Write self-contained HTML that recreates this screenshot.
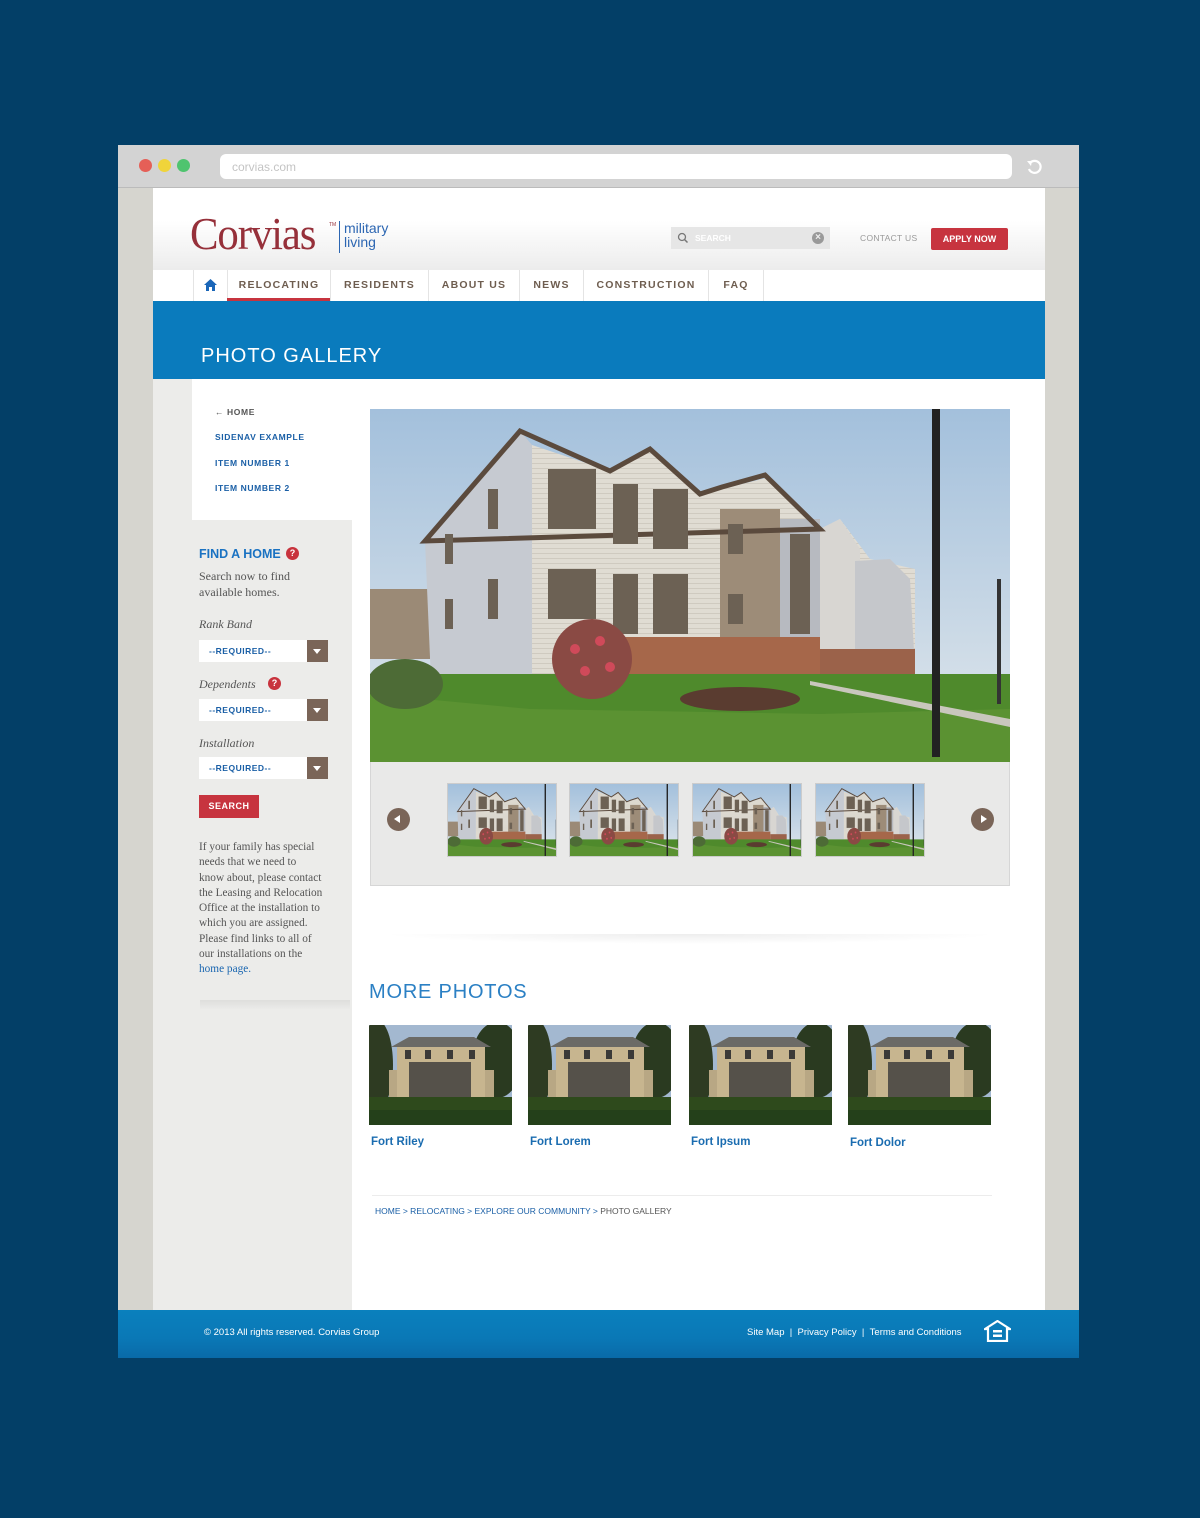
<!DOCTYPE html>
<html><head><meta charset="utf-8">
<style>
*{margin:0;padding:0;box-sizing:border-box}
body{width:1200px;height:1518px;background:#033f67;font-family:"Liberation Sans",sans-serif;position:relative;overflow:hidden}
.abs{position:absolute}
.win{left:118px;top:145px;width:961px;height:1213px;background:#d6d5cf}
.chrome{left:118px;top:145px;width:961px;height:43px;background:#d3d3d3;border-bottom:1px solid #bbb}
.dot{width:13px;height:13px;border-radius:50%;top:159px}
.url{left:220px;top:154px;width:792px;height:25px;background:#fff;border-radius:6px;color:#c4c4c4;font-size:12px;padding:6px 12px}
.page{left:153px;top:188px;width:892px;height:1122px;background:#fff}
.header{left:153px;top:188px;width:892px;height:82px;background:linear-gradient(#fff 40%,#ececec)}
.nav{left:153px;top:270px;width:892px;height:31px;background:#fff}
.nav span{position:absolute;top:0;height:31px;line-height:31px;font-size:10.5px;font-weight:bold;letter-spacing:1.2px;color:#6e5d4f;border-left:1px solid #e4e4e4;text-align:center}
.banner{left:153px;top:301px;width:892px;height:78px;background:#0a7bbd}
.side{left:153px;top:379px;width:199px;height:931px;background:#ececea}
.sidenav{left:192px;top:379px;width:160px;height:141px;background:#fff}
.sn{left:215px;font-size:8.5px;font-weight:bold;letter-spacing:.6px;color:#1a5fa6}
.serif{font-family:"Liberation Serif",serif;color:#555}
.sel{left:199px;width:129px;height:22px;background:#fff}
.sel b{position:absolute;left:10px;top:6px;font-size:8.5px;color:#1a5fa6;letter-spacing:.5px}
.sel i{position:absolute;right:0;top:0;width:21px;height:22px;background:#7a6558}
.sel i:after{content:"";position:absolute;left:6px;top:9px;border-left:4.5px solid transparent;border-right:4.5px solid transparent;border-top:5px solid #fff}
.q{width:13px;height:13px;border-radius:50%;background:#c8333d;color:#fff;font-size:9px;font-weight:bold;text-align:center;line-height:13px}
.cap{font-size:11.5px;font-weight:bold;color:#1a6cb0;top:1136px}
.tn{top:783px;width:110px;height:74px;border:1px solid #ccc}
.circ{top:808px;width:23px;height:23px;border-radius:50%;background:#7a6558}
</style></head><body>
<svg width="0" height="0" style="position:absolute">
<defs>
<linearGradient id="sky" x1="0" y1="0" x2="0" y2="1"><stop offset="0" stop-color="#a3c0dc"/><stop offset="1" stop-color="#e2e8ec"/></linearGradient>
<pattern id="sid" width="6" height="5" patternUnits="userSpaceOnUse"><rect width="6" height="5" fill="#e0dcd3"/><rect y="4" width="6" height="1" fill="#cfcac0"/></pattern>
<symbol id="apt" viewBox="0 0 640 354" preserveAspectRatio="none">
<rect width="640" height="354" fill="url(#sky)"/>
<rect x="0" y="180" width="60" height="70" fill="#9b8a76"/>
<polygon points="55,132 150,22 162,36 162,300 62,295" fill="#c6cad1"/>
<polygon points="162,36 240,62 280,40 330,85 360,78 400,68 450,120 470,110 500,150 545,160 545,260 162,300" fill="url(#sid)"/>
<rect x="350" y="100" width="60" height="135" fill="#9d8c78"/>
<rect x="410" y="110" width="40" height="130" fill="#b7bac0"/>
<polygon points="450,120 470,110 490,140 490,250 450,250" fill="#d8d6d2"/>
<polygon points="485,152 520,150 540,170 545,260 485,260" fill="#c5c7cb"/>
<rect x="237" y="228" width="213" height="75" fill="#a6674a"/>
<rect x="450" y="240" width="95" height="40" fill="#9b624a"/>
<polygon points="55,132 150,22 240,62 280,40 330,85 352,78 395,66 450,120" fill="none" stroke="#5b4a3d" stroke-width="5"/>
<g fill="#6c6154"><rect x="178" y="60" width="48" height="60"/><rect x="178" y="160" width="48" height="50"/><rect x="118" y="80" width="10" height="40"/><rect x="118" y="170" width="10" height="40"/><rect x="75" y="125" width="8" height="30"/><rect x="75" y="190" width="8" height="30"/><rect x="243" y="75" width="25" height="60"/><rect x="283" y="80" width="35" height="60"/><rect x="243" y="165" width="25" height="60"/><rect x="283" y="165" width="35" height="60"/><rect x="358" y="115" width="15" height="30"/><rect x="358" y="185" width="15" height="30"/><rect x="420" y="125" width="20" height="100"/></g>
<rect x="0" y="265" width="640" height="89" fill="#4f8a2c"/>
<polygon points="0,285 160,300 450,305 640,300 640,354 0,354" fill="#5b9232"/>
<polygon points="440,272 640,310 640,318 440,276" fill="#c9c7bd"/>
<ellipse cx="35" cy="275" rx="38" ry="25" fill="#4d6b36"/>
<ellipse cx="222" cy="250" rx="40" ry="40" fill="#8a4a44"/>
<circle cx="205" cy="240" r="5" fill="#d04a5a"/><circle cx="230" cy="232" r="5" fill="#d04a5a"/><circle cx="240" cy="258" r="5" fill="#d04a5a"/><circle cx="215" cy="262" r="5" fill="#d04a5a"/>
<ellipse cx="370" cy="290" rx="60" ry="12" fill="#5a3c30"/>
<rect x="562" y="0" width="8" height="348" fill="#222"/>
<rect x="627" y="170" width="4" height="125" fill="#333"/>
</symbol>
<symbol id="house" viewBox="0 0 143 100" preserveAspectRatio="none">
<rect width="143" height="100" fill="#8aa7c8"/>
<rect x="0" y="0" width="143" height="100" fill="#c9d2dc" opacity=".4"/>
<ellipse cx="8" cy="40" rx="16" ry="45" fill="#2e3b22"/>
<ellipse cx="128" cy="35" rx="25" ry="38" fill="#2a3a20"/>
<rect x="20" y="45" width="105" height="30" fill="#b8a784"/>
<rect x="28" y="20" width="88" height="55" fill="#c7b58f"/>
<polygon points="22,22 40,12 105,12 122,22" fill="#6b6a66"/>
<rect x="40" y="37" width="62" height="36" fill="#55514a"/>
<g fill="#3b3a38"><rect x="36" y="25" width="6" height="9"/><rect x="56" y="25" width="6" height="9"/><rect x="78" y="25" width="6" height="9"/><rect x="100" y="25" width="6" height="9"/></g>
<rect x="0" y="72" width="143" height="28" fill="#2e4a1c"/>
<rect x="0" y="85" width="143" height="15" fill="#24401a"/>
</symbol>
</defs></svg>

<div class="abs win"></div>
<div class="abs chrome"></div>
<div class="abs dot" style="left:139px;background:#e55f57"></div>
<div class="abs dot" style="left:158px;background:#f0d43a"></div>
<div class="abs dot" style="left:177px;background:#4fc46f"></div>
<div class="abs url">corvias.com</div>
<svg class="abs" style="left:1026px;top:159px" width="17" height="17" viewBox="0 0 17 17"><path d="M4 4 A6 6 0 1 1 3 10" fill="none" stroke="#fff" stroke-width="2.2"/><path d="M1 2 L6 2 L5 7 Z" fill="#fff"/></svg>

<div class="abs page"></div>
<div class="abs header"></div>
<div class="abs" style="left:190px;top:208px;font-family:'Liberation Serif',serif;font-size:46px;color:#96303a;letter-spacing:-1.2px;line-height:52px;transform:scaleX(0.93);transform-origin:left">Corvias</div>
<div class="abs" style="left:329px;top:222px;font-size:5px;color:#96303a">TM</div>
<div class="abs" style="left:339px;top:221px;width:1px;height:32px;background:#2c66b2"></div>
<div class="abs" style="left:344px;top:221px;font-size:14px;color:#2c66b2;line-height:14px">military<br>living</div>
<div class="abs" style="left:671px;top:227px;width:159px;height:22px;background:#e6e6e6"></div>
<svg class="abs" style="left:677px;top:232px" width="12" height="12"><circle cx="5" cy="5" r="3.5" fill="none" stroke="#777" stroke-width="1.3"/><path d="M7.5 7.5 L10.5 10.5" stroke="#777" stroke-width="1.5"/></svg>
<div class="abs" style="left:695px;top:233px;font-size:8.5px;font-weight:bold;color:#fff">SEARCH</div>
<div class="abs" style="left:812px;top:232px;width:12px;height:12px;border-radius:50%;background:#999;color:#eee;font-size:10px;line-height:12px;text-align:center;font-weight:bold">×</div>
<div class="abs" style="left:860px;top:233px;font-size:8.5px;color:#999;letter-spacing:.3px">CONTACT US</div>
<div class="abs" style="left:931px;top:228px;width:77px;height:22px;background:#c7343f;color:#fff;font-size:9px;font-weight:bold;text-align:center;line-height:22px;border-radius:2px">APPLY NOW</div>

<div class="abs nav">
<span style="left:40px;width:34px;border-left:1px solid #e4e4e4"><svg width="13" height="12" viewBox="0 0 13 12" style="margin-top:9px"><path d="M6.5 0 L13 6 L11 6 L11 12 L8 12 L8 8 L5 8 L5 12 L2 12 L2 6 L0 6 Z" fill="#1a66b8"/></svg></span>
<span style="left:74px;width:103px;color:#6e5d4f">RELOCATING</span>
<span style="left:177px;width:98px">RESIDENTS</span>
<span style="left:275px;width:91px">ABOUT US</span>
<span style="left:366px;width:64px">NEWS</span>
<span style="left:430px;width:125px">CONSTRUCTION</span>
<span style="left:555px;width:56px;border-right:1px solid #e4e4e4">FAQ</span>
</div>
<div class="abs" style="left:227px;top:298px;width:103px;height:3px;background:#c7343f"></div>

<div class="abs banner"></div>
<div class="abs" style="left:201px;top:345px;font-size:20px;color:#fff;letter-spacing:1px">PHOTO GALLERY</div>

<div class="abs side"></div>
<div class="abs sidenav"></div>
<div class="abs sn" style="top:407px;color:#555">&larr; HOME</div>
<div class="abs sn" style="top:432px">SIDENAV EXAMPLE</div>
<div class="abs sn" style="top:458px">ITEM NUMBER 1</div>
<div class="abs sn" style="top:483px">ITEM NUMBER 2</div>

<div class="abs" style="left:199px;top:547px;font-size:12.5px;font-weight:bold;color:#1a72c2">FIND A HOME</div>
<div class="abs q" style="left:286px;top:547px">?</div>
<div class="abs serif" style="left:199px;top:568px;font-size:12px;line-height:16px">Search now to find<br>available homes.</div>
<div class="abs serif" style="left:199px;top:617px;font-size:12px;font-style:italic">Rank Band</div>
<div class="abs sel" style="top:640px"><b>--REQUIRED--</b><i></i></div>
<div class="abs serif" style="left:199px;top:677px;font-size:12px;font-style:italic">Dependents</div>
<div class="abs q" style="left:268px;top:677px">?</div>
<div class="abs sel" style="top:699px"><b>--REQUIRED--</b><i></i></div>
<div class="abs serif" style="left:199px;top:736px;font-size:12px;font-style:italic">Installation</div>
<div class="abs sel" style="top:757px"><b>--REQUIRED--</b><i></i></div>
<div class="abs" style="left:199px;top:795px;width:60px;height:23px;background:#c7343f;color:#fff;font-size:9px;font-weight:bold;line-height:23px;text-align:center;letter-spacing:.5px">SEARCH</div>
<div class="abs serif" style="left:199px;top:840px;font-size:11.3px;line-height:15.3px">If your family has special<br>needs that we need to<br>know about, please contact<br>the Leasing and Relocation<br>Office at the installation to<br>which you are assigned.<br>Please find links to all of<br>our installations on the<br><span style="color:#1a66b0">home page.</span></div>
<div class="abs" style="left:200px;top:1000px;width:150px;height:10px;background:linear-gradient(rgba(0,0,0,.06),rgba(0,0,0,0))"></div>

<svg class="abs" style="left:370px;top:409px" width="640" height="354"><use href="#apt" width="640" height="354"/></svg>
<div class="abs" style="left:370px;top:762px;width:640px;height:124px;background:#e9e9e8;border:1px solid #d6d6d6;border-top:none"></div>
<div class="abs circ" style="left:387px"><div style="position:absolute;left:7px;top:7px;border-top:4.5px solid transparent;border-bottom:4.5px solid transparent;border-right:6px solid #fff"></div></div>
<div class="abs circ" style="left:971px"><div style="position:absolute;left:10px;top:7px;border-top:4.5px solid transparent;border-bottom:4.5px solid transparent;border-left:6px solid #fff"></div></div>
<svg class="abs tn" style="left:447px"><use href="#apt" width="110" height="74"/></svg>
<svg class="abs tn" style="left:569px"><use href="#apt" width="110" height="74"/></svg>
<svg class="abs tn" style="left:692px"><use href="#apt" width="110" height="74"/></svg>
<svg class="abs tn" style="left:815px"><use href="#apt" width="110" height="74"/></svg>

<div class="abs" style="left:380px;top:934px;width:620px;height:10px;background:radial-gradient(ellipse at top,rgba(0,0,0,.07),rgba(0,0,0,0) 70%)"></div>
<div class="abs" style="left:369px;top:981px;font-size:20px;color:#2b80c4;letter-spacing:.8px">MORE PHOTOS</div>
<svg class="abs" style="left:369px;top:1025px" width="143" height="100"><use href="#house" width="143" height="100"/></svg>
<svg class="abs" style="left:528px;top:1025px" width="143" height="100"><use href="#house" width="143" height="100"/></svg>
<svg class="abs" style="left:689px;top:1025px" width="143" height="100"><use href="#house" width="143" height="100"/></svg>
<svg class="abs" style="left:848px;top:1025px" width="143" height="100"><use href="#house" width="143" height="100"/></svg>
<div class="abs cap" style="left:371px">Fort Riley</div>
<div class="abs cap" style="left:530px">Fort Lorem</div>
<div class="abs cap" style="left:691px">Fort Ipsum</div>
<div class="abs cap" style="left:850px;top:1137px">Fort Dolor</div>
<div class="abs" style="left:372px;top:1195px;width:620px;height:1px;background:#ececec"></div>
<div class="abs" style="left:375px;top:1206px;font-size:8.5px;color:#1a5fa6">HOME &gt; RELOCATING &gt; EXPLORE OUR COMMUNITY &gt; <span style="color:#555">PHOTO GALLERY</span></div>

<div class="abs" style="left:118px;top:1310px;width:961px;height:48px;background:linear-gradient(#0a80bd,#0a78b6 60%,#096aa8)"></div>
<div class="abs" style="left:204px;top:1327px;font-size:9.5px;color:#fff">© 2013 All rights reserved. Corvias Group</div>
<div class="abs" style="left:747px;top:1327px;font-size:9.5px;color:#fff">Site Map &nbsp;| &nbsp;Privacy Policy &nbsp;| &nbsp;Terms and Conditions</div>
<svg class="abs" style="left:984px;top:1320px" width="27" height="22" viewBox="0 0 27 22"><path d="M13.5 1 L26 9 L23 9 L23 21 L4 21 L4 9 L1 9 Z" fill="none" stroke="#fff" stroke-width="2.2"/><rect x="9" y="10" width="9" height="2.5" fill="#fff"/><rect x="9" y="14.5" width="9" height="2.5" fill="#fff"/></svg>
</body></html>
